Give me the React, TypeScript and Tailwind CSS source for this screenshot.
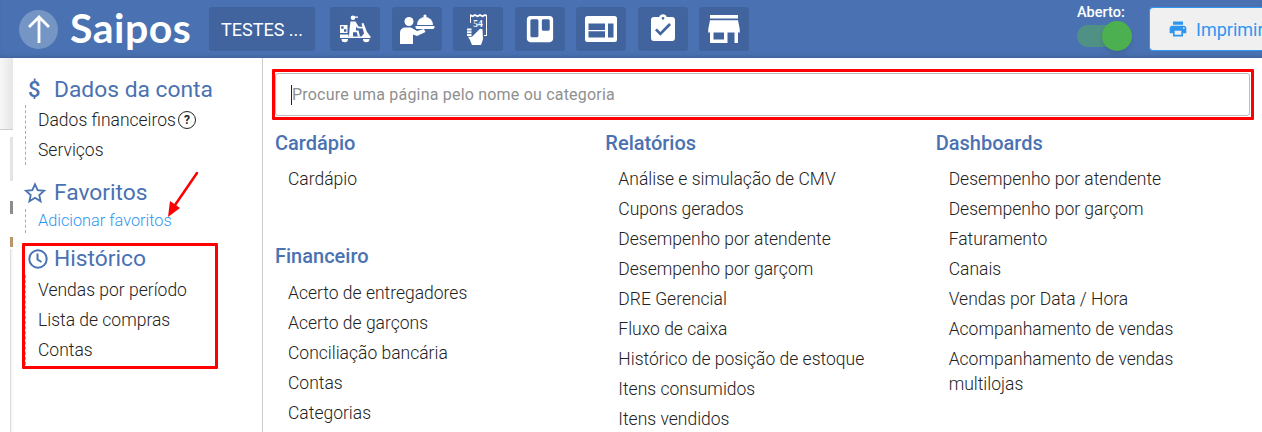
import { FaTrello } from 'react-icons/fa';
import { MdAssignmentTurnedIn, MdPrint, MdStore } from 'react-icons/md';

const cardapio = ['Cardápio'];
const financeiro = ['Acerto de entregadores', 'Acerto de garçons', 'Conciliação bancária', 'Contas', 'Categorias'];
const relatorios = [
    'Análise e simulação de CMV',
    'Cupons gerados',
    'Desempenho por atendente',
    'Desempenho por garçom',
    'DRE Gerencial',
    'Fluxo de caixa',
    'Histórico de posição de estoque',
    'Itens consumidos',
    'Itens vendidos',
];
const dashboards = [
    'Desempenho por atendente',
    'Desempenho por garçom',
    'Faturamento',
    'Canais',
    'Vendas por Data / Hora',
    'Acompanhamento de vendas',
    'Acompanhamento de vendas multilojas',
];

function MopedIcon() {
    return (
        <svg width="31" height="28" viewBox="0 0 31 28" fill="white">
            <circle cx="13" cy="2.800" r="2.300" />
            <path d="M11 1.500h7v1.300h-7z" />
            <path d="M10.500 6.500h5l3 5 4.500 .4v1.600l-5.500-.3-1.200-1.700-.5 4h2.700l1.500 6h-2.200l-1-4.200H13v4.500h-4l.6-8z" />
            <path fillRule="evenodd" d="M0 10h7.500v8H0zM1.200 11.300v2.400h2.400v-2.400zM4 14.300v2.400h2.400v-2.400z" />
            <path d="M21.500 8.500l2-.5 3.500 9 3.500 4.500v1.500H0v-3.500h8.500v2h13l2.500-3z" />
            <path d="M1.500 24h6.500a3.200 3.200 0 0 1-6.500 0zM23 24h6.500a3.200 3.200 0 0 1-6.500 0z" />
        </svg>
    );
}

function WaiterIcon() {
    return (
        <svg width="36" height="30" viewBox="0 0 36 30" fill="white">
            <circle cx="10" cy="7.500" r="4.500" />
            <path d="M1 30V18.500a5 5 0 0 1 5-5h6l6 3.500 7-2 1.500 3-8.500 4-4-1.500V30H1z" />
            <path d="M18 11a8 8 0 0 1 16 0z" />
            <circle cx="26" cy="2" r="1.600" />
            <path d="M16.500 12h19v1.500a2 2 0 0 1-2 1.500h-15a2 2 0 0 1-2-1.500z" />
        </svg>
    );
}

function ReceiptIcon() {
    return (
        <svg width="22" height="31" viewBox="0 0 22 31" fill="white">
            <path d="M3 0l2.500 1.300L8 0l2.500 1.300L13 0l2.500 1.300L18 0l2 1v21h-3v-1h2V2.500l-1-.5-2.500 1.300L13 2l-2.500 1.300L8 2 5.500 3.300 4 2.500V9H3z" />
            <text x="11" y="12.500" fill="white" fontSize="9.500" fontWeight="700" textAnchor="middle" fontFamily="'Liberation Serif', serif">54</text>
            <path d="M0 14.500h4.500v2H0zM0 17.200h4.500v2H0zM0 20h4.500v2H0zM1 22.700h4l8-8 2.500 .5 .5 10-2 5.800H5l-2-5z" />
        </svg>
    );
}

function BoardIcon() {
    return (
        <svg width="32" height="26" viewBox="0 0 32 26" fill="white">
            <path
                fillRule="evenodd"
                d="M2.500 0h27A2.500 2.500 0 0 1 32 2.500v21a2.500 2.500 0 0 1-2.500 2.500h-27A2.500 2.500 0 0 1 0 23.500v-21A2.500 2.500 0 0 1 2.500 0zM3.500 7.500v6.500h16.500V7.500zM3.500 15.200v6.300h16.500v-6.300zM23 7.500v14h5.500v-14z"
            />
        </svg>
    );
}

function ToolButton({ children }: { children: React.ReactNode }) {
    return <div className="w-[50px] h-11 rounded-[3px] bg-[#41649f] flex items-center justify-center shrink-0">{children}</div>;
}

function MenuList({ items }: { items: string[] }) {
    return (
        <div className="pl-[13px] pr-[30px] pt-[8px]">
            {items.map((item) => (
                <div key={item} className="py-[2.500px] leading-[25px] text-[17.500px] font-light text-[#222]">
                    {item}
                </div>
            ))}
        </div>
    );
}

function SectionTitle({ children }: { children: React.ReactNode }) {
    return <h3 className="text-[20px] leading-[26px] font-medium text-[#4a72b2]">{children}</h3>;
}

function SideTitle({ icon, children }: { icon: React.ReactNode; children: React.ReactNode }) {
    return (
        <div className="flex items-center h-[30px] text-[22.800px] text-[#4a72b2]">
            <span className="w-[41px] pl-[15px] shrink-0 flex items-center">{icon}</span>
            {children}
        </div>
    );
}

function SideList({ children }: { children: React.ReactNode }) {
    return <div className="ml-[12px] pl-[12px] border-l border-dashed border-[#aaa] text-[17.500px] font-light text-[#222] leading-[30px]">{children}</div>;
}

export default function App() {
    return (
        <div className="relative w-[1262px] h-[432px] overflow-hidden bg-white font-['Roboto',sans-serif]">
            {/* Top bar */}
            <header className="h-[58px] bg-[#4a72b2] flex items-center pl-[19px] shadow-[inset_0_-4px_4px_-3px_rgba(30,50,90,0.35)]">
                <div className="w-[39px] h-[39px] rounded-full bg-[#7595c5] flex items-center justify-center shrink-0">
                    <svg width="24" height="30" viewBox="0 0 24 30" fill="none" stroke="white" strokeWidth="2.800">
                        <path d="M12 29V3M2 13L12 3l10 10" />
                    </svg>
                </div>
                <span className="ml-[12px] w-[129px] text-[41px] leading-none font-bold text-white font-['Lato',sans-serif] tracking-[0.5px] shrink-0 -mt-[3px]">
                    Saipos
                </span>
                <div className="ml-[10px] w-[106px] h-11 rounded-[3px] bg-[#41649f] flex items-center pl-3 text-[18px] text-white shrink-0">
                    TESTES ...
                </div>
                <div className="ml-[15px] flex gap-[11.500px]">
                    <ToolButton><MopedIcon /></ToolButton>
                    <ToolButton><WaiterIcon /></ToolButton>
                    <ToolButton><ReceiptIcon /></ToolButton>
                    <ToolButton><FaTrello size={30} color="white" /></ToolButton>
                    <ToolButton><BoardIcon /></ToolButton>
                    <ToolButton><MdAssignmentTurnedIn size={32} color="white" /></ToolButton>
                    <ToolButton><MdStore size={42} color="white" /></ToolButton>
                </div>
                <div className="ml-auto flex items-center">
                    <div className="w-[56px] mr-[16px] flex flex-col items-start -mt-[6px]">
                        <span className="text-[14.500px] leading-[16px] font-medium text-white">Aberto:</span>
                        <div className="mt-[4px] w-[55px] flex items-center relative">
                            <div className="w-[45px] h-[22px] rounded-full bg-[#4f9184]" />
                            <div className="absolute right-0 w-[30px] h-[30px] rounded-full bg-[#4caf50] shadow-md" />
                        </div>
                    </div>
                    <div className="w-[130px] h-[44px] -mr-[17px] rounded-[4px] border border-[#2f96f0] bg-[#f0f0f0] flex items-center pl-[18px] gap-[8px] text-[#2f96f0] text-[18px]">
                        <MdPrint size={20} />
                        Imprimir
                    </div>
                </div>
            </header>

            <div className="flex h-[374px]">
                {/* Left gutter, page behind the menu */}
                <div className="w-[13px] shrink-0 flex flex-col items-end">
                    <div className="w-full h-[72px] bg-gradient-to-r from-[#f7f7f7] to-[#e6e6e6] border-b border-[#ccc]" />
                    <div className="w-[3px] h-[44px] mt-[7px] bg-[#e4e4e4]" />
                    <div className="w-[3px] h-[13px] mt-[20px] bg-[#8c8c8c]" />
                    <div className="w-[3px] h-[10px] mt-[23px] bg-[#b9956a]" />
                    <div className="w-[3px] flex-1 mt-[2px] border-l border-[#ddd] bg-[#f7f7f7]" />
                </div>

                {/* Sidebar */}
                <aside className="w-[250px] shrink-0 border-r border-[#ccc] pt-[17px]">
                    <SideTitle icon={<span className="text-[22px] font-medium leading-none">$</span>}>Dados da conta</SideTitle>
                    <SideList>
                        <div className="flex items-center">
                            Dados financeiros
                            <span className="ml-[2px] w-[18px] h-[18px] rounded-full border border-[#222] flex items-center justify-center text-[12px] font-bold leading-none">?</span>
                        </div>
                        <div>Serviços</div>
                    </SideList>
                    <div className="mt-[13px]">
                        <SideTitle
                            icon={
                                <svg width="22" height="22" viewBox="0 0 24 24" fill="none" stroke="#4a72b2" strokeWidth="2" className="-ml-[4px]">
                                    <path d="M12 2.500l2.900 6.300 6.900.8-5.100 4.700 1.400 6.800L12 17.200l-6.100 3.900 1.400-6.800L2.200 9.600l6.900-.8z" />
                                </svg>
                            }
                        >
                            Favoritos
                        </SideTitle>
                        <div className="ml-[12px] mt-[1px] pl-[12px] border-l border-dashed border-[#aaa] text-[16.300px] font-light text-[#2f96f0] leading-[24px]">
                            Adicionar favoritos
                        </div>
                    </div>
                    <div className="mt-[11px]">
                        <SideTitle
                            icon={
                                <svg width="20" height="20" viewBox="0 0 20 20" fill="none" stroke="#4a72b2" strokeWidth="2">
                                    <circle cx="10" cy="10" r="8.700" />
                                    <path d="M9.500 4.500V10.500L13.500 13" />
                                </svg>
                            }
                        >
                            Histórico
                        </SideTitle>
                        <div className="pt-[1px]">
                            <SideList>
                                <div>Vendas por período</div>
                                <div>Lista de compras</div>
                                <div>Contas</div>
                            </SideList>
                        </div>
                    </div>
                </aside>

                {/* Main */}
                <main className="flex-1 pl-3 pr-3 pt-[15px] min-w-0">
                    <div className="relative h-[43px] rounded-[3px] border border-[#bbb] flex items-center pl-4">
                        <span className="absolute left-[15px] top-[11px] w-px h-[20px] bg-[#222]" />
                        <input
                            readOnly
                            placeholder="Procure uma página pelo nome ou categoria"
                            className="w-full outline-none text-[16px] placeholder:text-[#8f8f8f] tracking-[0.2px] bg-transparent"
                        />
                    </div>
                    <div className="mt-[14px] grid grid-cols-3 w-[991px]">
                        <div>
                            <SectionTitle>Cardápio</SectionTitle>
                            <div className="h-[87px]">
                                <MenuList items={cardapio} />
                            </div>
                            <SectionTitle>Financeiro</SectionTitle>
                            <div className="pt-px">
                                <MenuList items={financeiro} />
                            </div>
                        </div>
                        <div>
                            <SectionTitle>Relatórios</SectionTitle>
                            <MenuList items={relatorios} />
                        </div>
                        <div>
                            <SectionTitle>Dashboards</SectionTitle>
                            <MenuList items={dashboards} />
                        </div>
                    </div>
                </main>
            </div>

            {/* Red annotations drawn over the screenshot */}
            <div className="absolute left-[272px] top-[69px] w-[982px] h-[51px] border-[3px] border-[#f00] rounded-[1px]" />
            <div className="absolute left-[22px] top-[243px] w-[196px] h-[126px] border-[3px] border-[#f00] rounded-[1px]" />
            <svg className="absolute left-[160px] top-[168px]" width="44" height="56" viewBox="0 0 44 56">
                <path d="M37 5L13 40" stroke="#f00" strokeWidth="2.500" strokeLinecap="round" />
                <path d="M8 49L10 33l10 7z" fill="#f00" />
            </svg>
        </div>
    );
}
